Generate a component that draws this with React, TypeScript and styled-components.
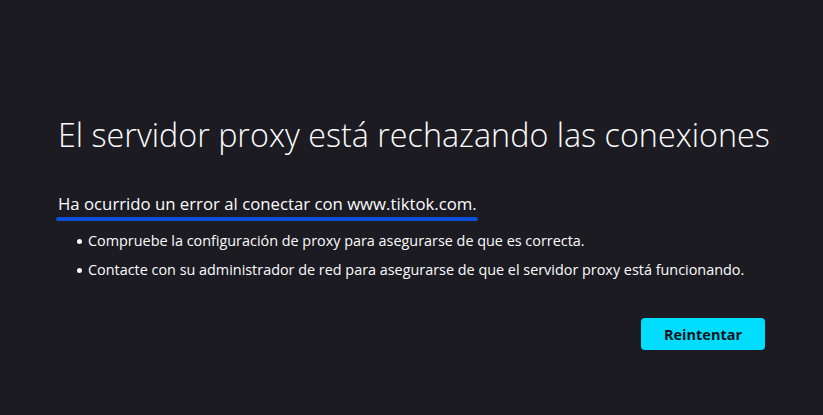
import React from "react";
import styled, { createGlobalStyle } from "styled-components";

const Global = createGlobalStyle`
  html, body { margin: 0; padding: 0; background: #1c1b22; }
  body { font-family: "Open Sans", "Noto Sans", sans-serif; color: #fbfbfe; }
`;

const Page = styled.main`
  width: 823px;
  height: 415px;
  box-sizing: border-box;
  padding: 112px 58px 0 58px;
  background: #1c1b22;
`;

const Container = styled.div`
  width: 707px;
  display: flex;
  flex-direction: column;
`;

const Title = styled.h1`
  margin: 0;
  font-size: 32.3px;
  font-weight: 300;
  line-height: 44px;
  white-space: nowrap;
  color: #fbfbfe;
`;

const Subtitle = styled.p`
  margin: 36px 0 0 0;
  font-size: 16.75px;
  line-height: 24px;
  color: #fbfbfe;
  display: inline-block;
  align-self: flex-start;
  position: relative;
  white-space: nowrap;
`;

const Underline = styled.span`
  position: absolute;
  left: -2px;
  right: -1px;
  bottom: -5px;
  height: 4px;
  border-radius: 2px;
  background: #0b4fd8;
`;

const List = styled.ul`
  margin: 15px 0 0 0;
  padding: 0 0 0 30px;
  list-style: none;
  display: flex;
  flex-direction: column;
  gap: 9px;
`;

const Item = styled.li`
  position: relative;
  font-size: 14.4px;
  line-height: 20px;
  color: #fbfbfe;
  white-space: nowrap;
  &::before {
    content: "";
    position: absolute;
    left: -11px;
    top: 8px;
    width: 5px;
    height: 5px;
    border-radius: 50%;
    background: #fbfbfe;
  }
`;

const Actions = styled.div`
  display: flex;
  justify-content: flex-end;
  margin-top: 38px;
`;

const Button = styled.button`
  width: 124px;
  height: 32px;
  border: none;
  border-radius: 4px;
  background: #00ddff;
  color: #15141a;
  font-family: "Open Sans", "Noto Sans", sans-serif;
  font-weight: 700;
  font-size: 14.5px;
  cursor: pointer;
`;

export default function App() {
  return (
    <>
      <Global />
      <Page>
        <Container>
          <Title>El servidor proxy está rechazando las conexiones</Title>
          <Subtitle>
            Ha ocurrido un error al conectar con www.tiktok.com.
            <Underline />
          </Subtitle>
          <List>
            <Item>Compruebe la configuración de proxy para asegurarse de que es correcta.</Item>
            <Item>Contacte con su administrador de red para asegurarse de que el servidor proxy está funcionando.</Item>
          </List>
          <Actions>
            <Button>Reintentar</Button>
          </Actions>
        </Container>
      </Page>
    </>
  );
}
